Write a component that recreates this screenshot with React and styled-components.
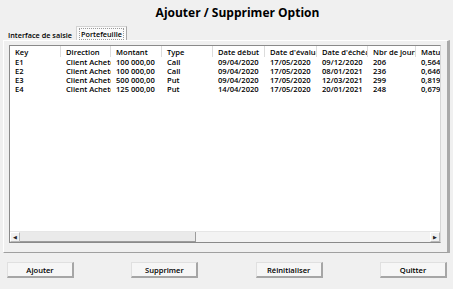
import React from "react";
import styled, { createGlobalStyle } from "styled-components";

const Global = createGlobalStyle`
  html, body {
    margin: 0;
    padding: 0;
    background: #f0f0f0;
  }
  body {
    font-family: "Open Sans", "Noto Sans", sans-serif;
    color: #000;
  }
`;

const Window = styled.div`
  width: 453px;
  height: 289px;
  display: flex;
  flex-direction: column;
  overflow: hidden;
  background: #f0f0f0;
`;

const Title = styled.h1`
  margin: 0;
  height: 25px;
  display: flex;
  align-items: center;
  justify-content: center;
  padding-left: 22px;
  font-size: 12px;
  font-weight: 700;
`;

const TabBar = styled.div`
  height: 15px;
  display: flex;
  align-items: flex-end;
  padding-left: 4px;
`;

const Tab = styled.div`
  height: ${(p) => (p.active ? "14px" : "12px")};
  display: flex;
  align-items: center;
  padding: 0 ${(p) => (p.active ? "3px" : "3px")};
  font-size: 7.3px;
  font-weight: 600;
  background: ${(p) => (p.active ? "#fafafa" : "transparent")};
  border: 1px solid ${(p) => (p.active ? "#d2d2d2" : "transparent")};
  border-right-color: ${(p) => (p.active ? "#a8a8a8" : "transparent")};
  border-bottom: none;
  box-sizing: border-box;
  span {
    outline: ${(p) => (p.active ? "1px dotted #9a9a9a" : "none")};
    padding: 0 1px;
  }
`;

const Panel = styled.div`
  flex: 1;
  margin: 0 3px 0 3px;
  display: flex;
  flex-direction: column;
  border-left: 1px solid #ffffff;
  border-top: 1px solid #ffffff;
  border-right: 3px solid #a9a9a9;
  border-bottom: 1px solid #a0a0a0;
  padding: 4px 6px 9px 5px;
`;

const List = styled.div`
  flex: 1;
  display: flex;
  flex-direction: column;
  background: #fff;
  border: 1px solid #8a8a8a;
  border-right-color: #d6d6d6;
  overflow: hidden;
`;

const Row = styled.div`
  display: grid;
  grid-template-columns: 51px 50px 51px 51px 52px 52px 51px 48px 40px;
  height: ${(p) => (p.header ? "11px" : "8.8px")};
  align-items: center;
  font-size: 7.6px;
  font-weight: 600;
  white-space: nowrap;
  margin-bottom: ${(p) => (p.header ? "1px" : "0")};
`;

const Cell = styled.div`
  overflow: hidden;
  padding-left: 5px;
  height: 100%;
  display: flex;
  align-items: center;
  border-right: ${(p) => (p.header ? "1px solid #dcdcdc" : "none")};
  box-sizing: border-box;
`;

const Body = styled.div`
  flex: 1;
`;

const ScrollBar = styled.div`
  height: 10px;
  display: flex;
  align-items: stretch;
  background: #f3f3f3;
  border-top: 1px solid #e6e6e6;
`;

const Arrow = styled.div`
  width: 10px;
  display: flex;
  align-items: center;
  justify-content: center;
  background: #f0f0f0;
  border: 1px solid #b8b8b8;
  border-top-color: #fff;
  border-left-color: #fff;
  box-sizing: border-box;
  font-size: 5px;
  color: #222;
`;

const Thumb = styled.div`
  width: 176px;
  background: #eaeaea;
  border-right: 1px solid #9c9c9c;
  border-bottom: 1px solid #9c9c9c;
  box-sizing: border-box;
`;

const Track = styled.div`
  flex: 1;
`;

const Footer = styled.div`
  display: flex;
  justify-content: space-between;
  padding: 9px 6px 11px 7px;
`;

const Button = styled.button`
  width: 67px;
  height: 16px;
  padding: 0;
  font-family: inherit;
  font-size: 7.6px;
  font-weight: 600;
  color: #000;
  background: #f6f6f6;
  border: 1px solid #e0e0e0;
  border-right: 2px solid #a6a6a6;
  border-bottom: 2px solid #a6a6a6;
  box-sizing: border-box;
`;

const headers = [
  "Key",
  "Direction",
  "Montant",
  "Type",
  "Date début",
  "Date d'évalua",
  "Date d'échéa",
  "Nbr de jours",
  "Maturité",
];

const options = [
  ["E1", "Client Acheteur", "100 000,00", "Call", "09/04/2020", "17/05/2020", "09/12/2020", "206", "0,5643"],
  ["E2", "Client Acheteur", "100 000,00", "Call", "09/04/2020", "17/05/2020", "08/01/2021", "236", "0,6465"],
  ["E3", "Client Acheteur", "500 000,00", "Put", "09/04/2020", "17/05/2020", "12/03/2021", "299", "0,8191"],
  ["E4", "Client Acheteur", "125 000,00", "Put", "14/04/2020", "17/05/2020", "20/01/2021", "248", "0,6794"],
];

export default function App() {
  return (
    <Window>
      <Global />
      <Title>Ajouter / Supprimer Option</Title>
      <TabBar>
        <Tab>Interface de saisie</Tab>
        <Tab active>
          <span>Portefeuille</span>
        </Tab>
      </TabBar>
      <Panel>
        <List>
          <Row header>
            {headers.map((h) => (
              <Cell header key={h}>
                {h}
              </Cell>
            ))}
          </Row>
          <Body>
            {options.map((o) => (
              <Row key={o[0]}>
                {o.map((v, i) => (
                  <Cell key={i}>{v}</Cell>
                ))}
              </Row>
            ))}
          </Body>
          <ScrollBar>
            <Arrow>◀</Arrow>
            <Thumb />
            <Track />
            <Arrow>▶</Arrow>
          </ScrollBar>
        </List>
      </Panel>
      <Footer>
        <Button>Ajouter</Button>
        <Button>Supprimer</Button>
        <Button>Réinitialiser</Button>
        <Button>Quitter</Button>
      </Footer>
    </Window>
  );
}
